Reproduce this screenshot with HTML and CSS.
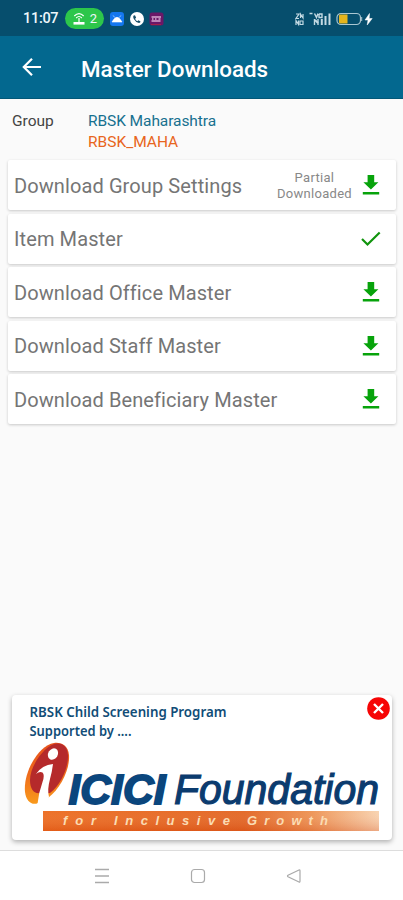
FILE: index.html
```html
<!DOCTYPE html>
<html lang="en">
<head>
<meta charset="utf-8">
<title>Master Downloads</title>
<link rel="stylesheet" href="styles.css">
</head>
<body>
<svg class="defs" width="0" height="0">
  <symbol id="download" viewBox="0 0 18 22"><path d="M5.6 1h6.6v7.2h4.2L8.9 15.4 1.4 8.2h4.2zM.8 18h16.4v2.5H.8z" fill="#07a30b"/></symbol>
</svg>
<header>
  <div class="status">
    <span class="time">11:07</span>
    <span class="pill">
      <svg width="14" height="14" viewBox="0 0 14 14" fill="none" stroke="#fff" stroke-width="1.2"><path d="M2.3 4Q7-.8 11.7 4M4.2 6Q7 3 9.8 6M7 6v4"/><path d="M1.5 11.3h11" stroke-width="2.6"/></svg>
      <span>2</span>
    </span>
    <svg class="apps" width="54" height="16" viewBox="0 0 54 16">
      <rect x="0" y="1" width="14" height="14" rx="3" fill="#1477ef"/><path d="M2 11Q7 1.5 12 11zM3.2 4.5l1.5 2M10.8 4.5l-1.5 2" fill="#fff" stroke="#fff" stroke-width=".6"/>
      <circle cx="27" cy="8" r="7" fill="#fff"/><path d="M24 4.2q-1.6 1 0 4 2 3.5 5 3.8 1.5-.2 1.5-1.5l-2-1.2-1.2 1q-1.7-.8-2.2-2.5l1-1-1-2.4z" fill="#164d67"/>
      <rect x="39.500" y="1.500" width="14" height="13" rx="2.500" fill="#6b1767"/><path d="M41 13.500h10" stroke="#a51f48"/><path d="M41.500 6h9.500M41.500 10h9M42 8h1.500m1.500 0h1.500m2 0h2" stroke="#d9a9d4" stroke-width="1.500"/>
    </svg>
    <svg class="signals" width="80" height="16" viewBox="0 0 80 16">
      <g fill="none" stroke="#c3dae4" stroke-width="1.200"><path d="M2 3h3l-3 4.500h3M6.500 7V3l2.500 4V3M2 14V9.500l2.500 4v-4M6 10h3v3.500H6z"/><path d="M15.500 2.500h3M20.500 2.500l2 4 1.500-4M25 3v3.500h3V3h-3M20.500 8v6M24 8v6" stroke-width="1.400"/><path d="M21 9l3 3M27.800 8v6M31.500 5v9M35.500 2.500V14" stroke-width="2"/></g>
      <rect x="43" y="2.500" width="23.500" height="11" rx="4" fill="none" stroke="#aac7d2" stroke-width="1.200"/><path d="M45 4.500q0-1 1-1h7.500v9H46q-1 0-1-1z" fill="#e5b51d"/><path d="M67.700 6v4" stroke="#aac7d2"/>
      <path d="M75.500 2.500L71 9h3l-.8 5 5-6.500h-3z" fill="#fff" stroke="#fff" stroke-width=".5"/>
    </svg>
  </div>
  <div class="appbar">
    <svg width="20" height="20" viewBox="0 0 20 20" fill="none" stroke="#fff" stroke-width="2.200"><path d="M19 10H2.500M10 1.800L1.800 10l8.200 8.200"/></svg>
    <h1>Master Downloads</h1>
  </div>
</header>
<main>
  <section class="group">
    <span class="label">Group</span>
    <div class="names"><div class="name">RBSK Maharashtra</div><div class="code">RBSK_MAHA</div></div>
  </section>
  <ul class="list">
    <li><span>Download Group Settings</span><span class="partial">Partial<br>Downloaded</span><svg class="icon"><use href="#download"/></svg></li>
    <li><span>Item Master</span><svg class="check" viewBox="0 0 20 16"><path d="M1 8l5.500 5.500L18.700 1.500" fill="none" stroke="#10940d" stroke-width="2.200"/></svg></li>
    <li><span>Download Office Master</span><svg class="icon"><use href="#download"/></svg></li>
    <li><span>Download Staff Master</span><svg class="icon"><use href="#download"/></svg></li>
    <li><span>Download Beneficiary Master</span><svg class="icon"><use href="#download"/></svg></li>
  </ul>
  <aside class="banner">
    <svg width="380" height="145" viewBox="12 695 380 145">
      <defs>
        <linearGradient id="bar"><stop offset="0" stop-color="#ec6a1c"/><stop offset=".6" stop-color="#e2631f"/><stop offset=".8" stop-color="#ed9150"/><stop offset="1" stop-color="#f8d2ae"/></linearGradient>
        <linearGradient id="shade" x2="0" y2="1"><stop offset="0" stop-color="#fff" stop-opacity=".05"/><stop offset="1" stop-color="#c83208" stop-opacity=".25"/></linearGradient>
        <linearGradient id="flame" x2="0" y2="1"><stop offset="0" stop-color="#e7511d"/><stop offset=".5" stop-color="#ee6a1c"/><stop offset="1" stop-color="#f99a1c"/></linearGradient>
      </defs>
      <g class="support"><text x="29.500" y="717" textLength="197" lengthAdjust="spacingAndGlyphs">RBSK Child Screening Program</text><text x="29.500" y="735.500" textLength="102" lengthAdjust="spacingAndGlyphs">Supported by ....</text></g>
      <path d="M54 743C39 745 23 772 25 792C26 801 32 806 38 803L48 798C61 788 70 769 69 755C68 746 62 742 54 743z" fill="url(#flame)"/>
      <path d="M57 743.500C46 744 30 765 30 780C30 789 34 794 40 793L50 793C61 785 68.500 767 68 755C67.500 747 63 743 57 743.500z" fill="#b52a2b"/>
      <ellipse cx="53" cy="754" rx="4.800" ry="6" transform="rotate(30 53 754)" fill="#fff"/>
      <path d="M36 774Q42 765 53 764Q52 772 50 779Q47 790 49 797L46 805L37.500 804Q38.500 793 42.500 782Q45 775 42.500 772.500Q39.500 771 36 774z" fill="#fff"/>
      <text class="icici" x="68.500" y="804" textLength="97" lengthAdjust="spacingAndGlyphs">ICICI</text>
      <text class="foundation" x="174" y="804" textLength="205" lengthAdjust="spacingAndGlyphs">Foundation</text>
      <path d="M43 811h336v20H43z" fill="url(#bar)"/><path d="M43 811h336v20H43z" fill="url(#shade)"/>
      <text class="tagline" y="825"><tspan x="63" textLength="33">for</tspan><tspan x="114" textLength="116">Inclusive</tspan><tspan x="247" textLength="81">Growth</tspan></text>
    </svg>
    <button class="close" aria-label="Close"><svg width="23" height="23" viewBox="0 0 23 23"><circle cx="11.500" cy="11.500" r="11.300" fill="#f60505"/><path d="M7 7l9 9M16 7l-9 9" stroke="#fff" stroke-width="2.400"/></svg></button>
  </aside>
</main>
<nav>
  <svg width="14" height="16" viewBox="0 0 14 16"><path d="M0 1.500h14M0 8h14M0 14.500h14" stroke="#aaa" stroke-width="1.300"/></svg>
  <svg width="16" height="16" viewBox="0 0 16 16"><rect x="1.500" y="1.500" width="13" height="13" rx="3" fill="none" stroke="#aaa" stroke-width="1.200"/></svg>
  <svg width="16" height="16" viewBox="0 0 16 16"><path d="M13 2Q14 1.500 14 3v10q0 1.500-1 1L2 8.700q-1-.7 0-1.400z" fill="none" stroke="#aaa" stroke-width="1.200"/></svg>
</nav>
</body>
</html>
```
FILE: styles.css
```css
* { box-sizing: border-box; }
body { margin: 0; width: 403px; height: 900px; display: flex; flex-direction: column; overflow: hidden; background: #fafafa; font-family: Roboto, sans-serif; }
.defs { position: absolute; }
.status { height: 36px; background: #064e6d; display: flex; align-items: center; padding: 1px 29px 0 23px; color: #edf7fb; }
.time { width: 42px; font-size: 14.5px; font-weight: 500; letter-spacing: -.3px; }
.pill { width: 39px; height: 21px; border-radius: 11px; background: #2dc64b; display: flex; align-items: center; justify-content: center; gap: 4px; font-size: 13px; }
.apps { margin-left: 6px; }
.signals { margin-left: auto; }
.appbar { height: 62.500px; background: #03688f; border-bottom: 1px solid #025878; display: flex; align-items: center; padding: 1px 0 0 22px; }
.appbar h1 { margin: 3px 0 0 39px; color: #fff; font-size: 22.4px; line-height: 28px; font-weight: 500; letter-spacing: 0; white-space: nowrap; }
main { flex: 1; display: flex; flex-direction: column; border-bottom: 1px solid #ddd; }
.group { display: flex; padding: 12px 12px 0; height: 61.500px; font-size: 15.5px; line-height: 21.300px; color: #444; }
.label { width: 76px; }
.name { color: #17708f; letter-spacing: -.08px; }
.code { color: #e86520; }
.list { list-style: none; margin: 0; padding: 0 7px 0 8px; display: flex; flex-direction: column; gap: 3.600px; }
.list li { height: 50px; background: #fff; border-radius: 2px; box-shadow: 0 1px 3px rgba(0,0,0,.2); display: flex; align-items: center; padding: 1px 16px 0 6px; color: #757575; font-size: 20px; letter-spacing: .1px; white-space: nowrap; }
.partial { margin-left: auto; margin-right: 10px; font-size: 13px; line-height: 15.500px; text-align: center; letter-spacing: .3px; color: #888; }
.icon { width: 18px; height: 22px; margin: -1px 0 0 auto; }
.partial + .icon { margin-left: 0; }
.check { width: 20px; height: 16px; margin: -1px -1px 0 auto; }
.banner { position: relative; width: 380px; height: 145px; margin: auto 0 10px 12px; background: #fff; border-radius: 4px; box-shadow: 0 2px 5px rgba(0,0,0,.3); }
.banner > svg { display: block; }
.support { font: 600 14px "Noto Sans", sans-serif; fill: #114d77; }
.icici { font: italic 700 42px "Liberation Sans", sans-serif; fill: #0b467d; stroke: #0b467d; stroke-width: 1.800px; }
.foundation { font: italic 400 42px "Liberation Sans", sans-serif; fill: #0b3b6e; stroke: #0b3b6e; stroke-width: 1.200px; }
.tagline { font: italic 700 13px "Liberation Sans", sans-serif; fill: #fbdcb4; }
.close { position: absolute; top: 2px; right: 2px; width: 23px; height: 23px; padding: 0; border: 0; background: none; }
.close svg { display: block; }
nav { height: 49px; background: #fff; display: flex; align-items: center; justify-content: space-between; padding: 1px 101px 0 95px; }
```
